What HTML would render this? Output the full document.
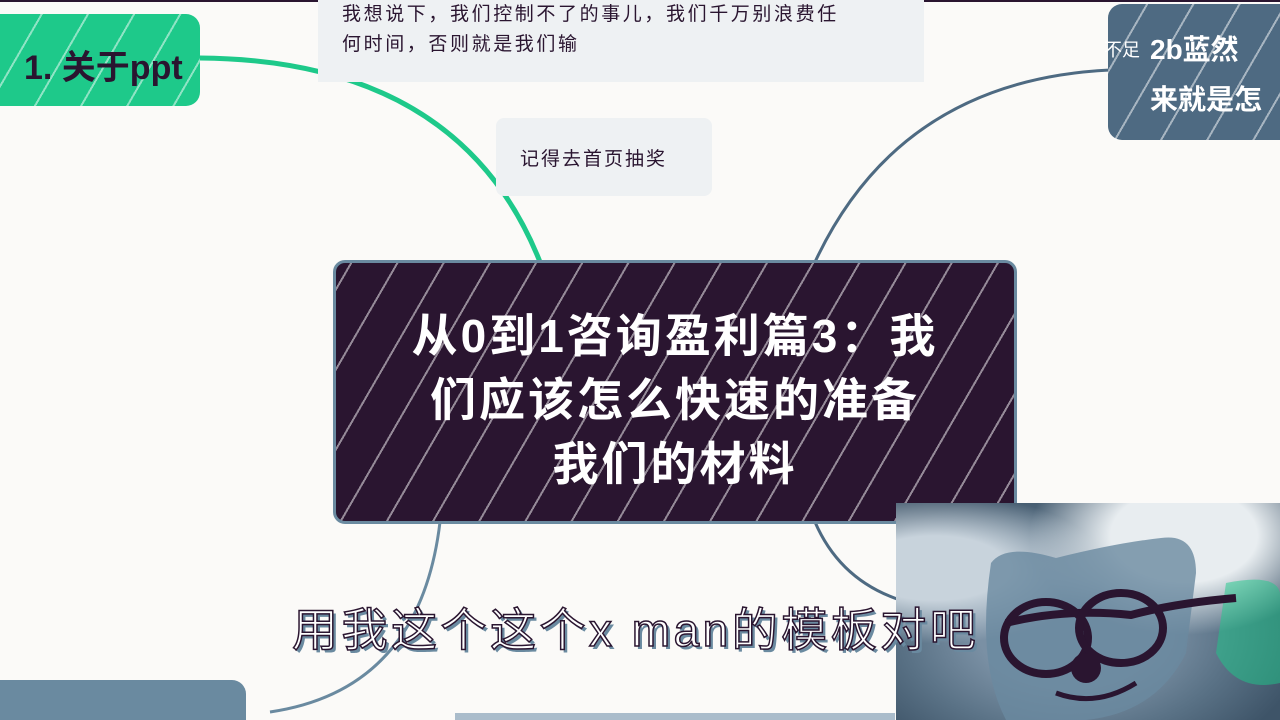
<!DOCTYPE html>
<html><head><meta charset="utf-8"><style>
body{margin:0;width:1280px;height:720px;overflow:hidden;background:#fbfaf8;position:relative;font-family:"Liberation Sans","Noto Sans CJK SC",sans-serif}
.a{position:absolute}
.stripes{background-image:repeating-linear-gradient(-60deg,transparent 0 22px,rgba(255,255,255,.5) 22px 24px,transparent 24px 40px)}
</style></head><body>
<div class="a" style="left:0;top:0;width:1280px;height:2px;background:#2a1530"></div>
<svg class="a" style="left:0;top:0" width="1280" height="720">
<path d="M200 58 Q460 60 540 262" stroke="#1ec98a" stroke-width="5" fill="none"/>
<path d="M815 262 Q900 80 1110 70" stroke="#4e6a82" stroke-width="3" fill="none"/>
<path d="M440 522 Q420 690 270 712" stroke="#6a8aa0" stroke-width="3" fill="none"/>
<path d="M815 522 Q840 580 900 600" stroke="#4e6a82" stroke-width="3" fill="none"/>
</svg>
<div class="a stripes" style="left:0;top:14px;width:200px;height:92px;background-color:#1ec98a;border-radius:0 14px 14px 0"></div>
<div class="a" style="left:24px;top:40px;font-size:34px;font-weight:bold;color:#2a1530">1. 关于ppt</div>
<div class="a" style="left:318px;top:0;width:606px;height:82px;background:#eef1f3"></div>
<div class="a" style="left:342px;top:0;font-size:19px;line-height:30px;color:#2a1530;letter-spacing:2.6px">我想说下，我们控制不了的事儿，我们千万别浪费任<br>何时间，否则就是我们输</div>
<div class="a" style="left:496px;top:118px;width:216px;height:78px;background:#eef1f3;border-radius:8px"></div>
<div class="a" style="left:520px;top:144px;font-size:19px;color:#2a1530;letter-spacing:2px">记得去首页抽奖</div>
<div class="a stripes" style="left:1108px;top:4px;width:172px;height:136px;background-color:#4e6a82;border-radius:14px 0 0 14px"></div>
<div class="a" style="left:1104px;top:36px;font-size:18px;color:#fff">不足</div>
<div class="a" style="left:1150px;top:28px;font-size:28px;font-weight:bold;color:#fff;white-space:nowrap">2b蓝然</div>
<div class="a" style="left:1150px;top:78px;font-size:28px;font-weight:bold;color:#fff;white-space:nowrap">来就是怎</div>
<div class="a stripes" style="left:333px;top:260px;width:684px;height:264px;background-color:#2a1530;border:3px solid #6a8aa0;border-radius:12px;box-sizing:border-box"></div>
<div class="a" style="left:340px;top:304px;width:670px;text-align:center;font-size:46px;line-height:64px;font-weight:bold;color:#fff;letter-spacing:3px">从0到1咨询盈利篇3：我<br>们应该怎么快速的准备<br>我们的材料</div>
<div class="a" style="left:896px;top:503px;width:384px;height:217px;background:radial-gradient(ellipse at 75% 15%,#e8edf0 0 18%,transparent 38%),radial-gradient(ellipse at 10% 30%,#c8d3dc 0 15%,transparent 35%),radial-gradient(ellipse at 45% 60%,#7a90a4 0 30%,#5a7286 55%,#3e5468 80%);"></div>
<svg class="a" style="left:896px;top:503px" width="384" height="217">
<path d="M95 60 Q110 40 160 55 Q220 40 265 35 Q300 30 300 70 L290 150 Q260 210 190 217 L110 217 Q80 160 95 60Z" fill="#6a8aa0" opacity=".8"/>
<path d="M330 80 Q380 70 384 90 L384 180 Q340 190 320 150Z" fill="#1ec98a" opacity=".5"/>
<path d="M110 120 Q170 105 235 112 Q280 100 340 95" stroke="#2a1530" stroke-width="8" fill="none"/>
<ellipse cx="150" cy="135" rx="42" ry="36" stroke="#2a1530" stroke-width="8" fill="none"/>
<ellipse cx="225" cy="125" rx="42" ry="35" stroke="#2a1530" stroke-width="8" fill="none"/>
<circle cx="190" cy="165" r="15" fill="#2a1530"/>
<path d="M160 190 Q200 205 240 180" stroke="#2a1530" stroke-width="5" fill="none"/>
</svg>
<div class="a" style="left:292px;top:594px;font-size:46px;color:#fff;white-space:nowrap;letter-spacing:3.5px;-webkit-text-stroke:1.5px #2a1530;text-shadow:3px 3px 0 #6a8aa0">用我这个这个x man的模板对吧</div>
<div class="a" style="left:0;top:680px;width:246px;height:40px;background:#6a8aa0;border-radius:0 14px 0 0"></div>
<div class="a" style="left:455px;top:713px;width:440px;height:7px;background:#aabccb"></div>
</body></html>
